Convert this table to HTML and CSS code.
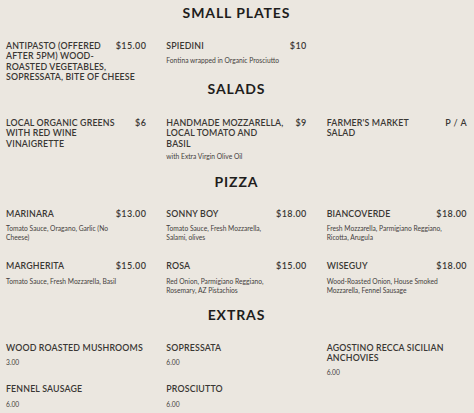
FILE: index.html
```html
<!DOCTYPE html>
<html lang="en">
<head>
<meta charset="utf-8">
<title>Menu</title>
<link rel="stylesheet" href="styles.css">
</head>
<body>
<main class="menu">
  <section class="section section--small">
    <h2 class="section-title">SMALL PLATES</h2>
    <div class="grid">
      <div class="item">
        <span class="price">$15.00</span>
        <h3 class="item-name">ANTIPASTO (OFFERED<br>AFTER 5PM) WOOD-<br>ROASTED VEGETABLES,<br>SOPRESSATA, BITE OF CHEESE</h3>
      </div>
      <div class="item">
        <span class="price">$10</span>
        <h3 class="item-name">SPIEDINI</h3>
        <p class="desc">Fontina wrapped in Organic Prosciutto</p>
      </div>
    </div>
  </section>

  <section class="section section--salads">
    <h2 class="section-title">SALADS</h2>
    <div class="grid">
      <div class="item">
        <span class="price">$6</span>
        <h3 class="item-name">LOCAL ORGANIC GREENS<br>WITH RED WINE<br>VINAIGRETTE</h3>
      </div>
      <div class="item">
        <span class="price">$9</span>
        <h3 class="item-name">HANDMADE MOZZARELLA,<br>LOCAL TOMATO AND<br>BASIL</h3>
        <p class="desc">with Extra Virgin Olive Oil</p>
      </div>
      <div class="item">
        <span class="price">P / A</span>
        <h3 class="item-name">FARMER'S MARKET<br>SALAD</h3>
      </div>
    </div>
  </section>

  <section class="section section--pizza">
    <h2 class="section-title">PIZZA</h2>
    <div class="grid grid--spaced">
      <div class="item">
        <span class="price">$13.00</span>
        <h3 class="item-name">MARINARA</h3>
        <p class="desc">Tomato Sauce, Oragano, Garlic (No<br>Cheese)</p>
      </div>
      <div class="item">
        <span class="price">$18.00</span>
        <h3 class="item-name">SONNY BOY</h3>
        <p class="desc">Tomato Sauce, Fresh Mozzarella,<br>Salami, olives</p>
      </div>
      <div class="item">
        <span class="price">$18.00</span>
        <h3 class="item-name">BIANCOVERDE</h3>
        <p class="desc">Fresh Mozzarella, Parmigiano Reggiano,<br>Ricotta, Arugula</p>
      </div>
      <div class="item">
        <span class="price">$15.00</span>
        <h3 class="item-name">MARGHERITA</h3>
        <p class="desc">Tomato Sauce, Fresh Mozzarella, Basil</p>
      </div>
      <div class="item">
        <span class="price">$15.00</span>
        <h3 class="item-name">ROSA</h3>
        <p class="desc">Red Onion, Parmigiano Reggiano,<br>Rosemary, AZ Pistachios</p>
      </div>
      <div class="item">
        <span class="price">$18.00</span>
        <h3 class="item-name">WISEGUY</h3>
        <p class="desc">Wood-Roasted Onion, House Smoked<br>Mozzarella, Fennel Sausage</p>
      </div>
    </div>
  </section>

  <section class="section section--extras">
    <h2 class="section-title">EXTRAS</h2>
    <div class="grid grid--tight">
      <div class="item">
        <h3 class="item-name">WOOD ROASTED MUSHROOMS</h3>
        <p class="desc desc--price">3.00</p>
      </div>
      <div class="item">
        <h3 class="item-name">SOPRESSATA</h3>
        <p class="desc desc--price">6.00</p>
      </div>
      <div class="item">
        <h3 class="item-name">AGOSTINO RECCA SICILIAN<br>ANCHOVIES</h3>
        <p class="desc desc--price">6.00</p>
      </div>
      <div class="item">
        <h3 class="item-name">FENNEL SAUSAGE</h3>
        <p class="desc desc--price">6.00</p>
      </div>
      <div class="item">
        <h3 class="item-name">PROSCIUTTO</h3>
        <p class="desc desc--price">6.00</p>
      </div>
    </div>
  </section>
</main>
</body>
</html>
```

FILE: styles.css
```css
html, body {
  margin: 0;
  padding: 0;
  background: #ebe7e0;
}

body {
  font-family: Lato, "Liberation Sans", sans-serif;
  color: #3b3835;
}

.menu {
  padding: 5px 7px 0 6px;
}

.section-title {
  margin: 0;
  text-align: center;
  font-size: 14px;
  line-height: 16px;
  font-weight: 700;
  letter-spacing: 0.9px;
  color: #1e1d1c;
}

.section--salads .section-title { margin-top: -1px; }
.section--pizza .section-title { margin-top: 13px; }
.section--extras .section-title { margin-top: 12px; }

.grid {
  display: grid;
  grid-template-columns: repeat(3, 1fr);
  column-gap: 20px;
  row-gap: 19px;
  margin-top: 20px;
}

.section--salads .grid { margin-top: 21px; }
.section--pizza .grid { margin-top: 19px; }
.grid--tight { row-gap: 7px; }

.item {
  min-width: 0;
}

.item-name {
  margin: 0;
  font-size: 8.8px;
  line-height: 10.3px;
  font-weight: 600;
  letter-spacing: 0.15px;
  white-space: nowrap;
  color: #3a3734;
}

.price {
  float: right;
  font-size: 9px;
  line-height: 10.3px;
  font-weight: 600;
  letter-spacing: 0.4px;
  color: #3a3734;
}

.desc {
  margin: 5px 0 0;
  font-size: 6.7px;
  line-height: 9px;
  color: #45413d;
  white-space: nowrap;
}

.section--salads .desc { margin-top: 3px; }
```
